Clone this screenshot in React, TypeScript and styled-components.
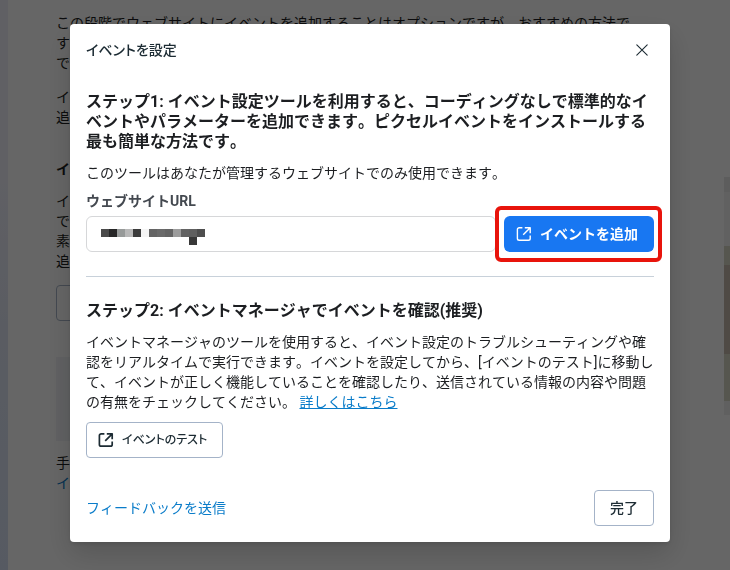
import React from "react";
import styled, { createGlobalStyle, css } from "styled-components";

const GlobalStyle = createGlobalStyle`
  *, *::before, *::after { box-sizing: border-box; }
  body {
    margin: 0;
    background: #fff;
    color: #1c1e21;
    font-family: Roboto, "Noto Sans CJK JP", sans-serif;
    font-size: 14px;
    line-height: 20px;
    font-kerning: none;
  }
  h1, h2, h3, p { margin: 0; }
  button, input { font: inherit; }
`;

const Page = styled.div`
  display: flex;
  height: 100vh;
  overflow: hidden;
`;

const Rail = styled.div`
  flex: none;
  width: 8px;
  background: linear-gradient(#f0f0fa, #f0f0fa 30%, #e0e6f5 60%, #d8e2f5);
`;

const Content = styled.main`
  flex: 1;
  display: flex;
  flex-direction: column;
  padding: 13px 88px 0 48px;
`;

const ContentText = styled.p`
  white-space: pre-line;
  margin-bottom: 14px;
`;

const ContentTitle = styled.h3`
  font-size: 14px;
  line-height: 20px;
  margin: 18px 0 12px;
`;

const ContentButton = styled.button`
  flex: none;
  width: 160px;
  height: 36px;
  margin-bottom: 36px;
  background: #fff;
  border: 1px solid #a9b6c9;
  border-radius: 4px;
`;

const ContentPanel = styled.div`
  flex: none;
  height: 84px;
  margin-bottom: 12px;
  background: #f1f3f6;
`;

const Aside = styled.aside`
  flex: none;
  width: 6px;
  margin-top: 177px;
`;

const AsideBand = styled.div<{ $height: number; $color: string }>`
  height: ${(p) => p.$height}px;
  background: ${(p) => p.$color};
`;

const Link = styled.a<{ $underlined?: boolean }>`
  color: #0a7cc9;
  text-decoration: ${(p) => (p.$underlined ? "underline" : "none")};
`;

const Backdrop = styled.div`
  position: fixed;
  inset: 0;
  display: flex;
  justify-content: center;
  align-items: flex-start;
  padding: 24px 60px 24px 70px;
  background: rgba(0, 0, 0, 0.6);
`;

const Dialog = styled.section`
  width: 100%;
  max-width: 600px;
  padding: 16px;
  background: #fff;
  border-radius: 4px;
  box-shadow: 0 12px 28px rgba(0, 0, 0, 0.16), 0 2px 4px rgba(0, 0, 0, 0.1);
`;

const DialogHeader = styled.header`
  display: flex;
  align-items: center;
  justify-content: space-between;
  height: 20px;
  margin-bottom: 32px;
`;

const DialogTitle = styled.h1`
  font-size: 14px;
  font-weight: 500;
  line-height: 20px;
  color: #1c2b33;
  font-feature-settings: "palt";
`;

const CloseButton = styled.button`
  display: flex;
  padding: 4px;
  margin-right: 2px;
  border: 0;
  background: none;
  color: #1c2b33;
`;

const StepTitle = styled.h2`
  font-size: 16px;
  font-weight: 700;
  line-height: 20px;
  margin-bottom: 11px;
`;

const Label = styled.label`
  display: block;
  margin: 8px 0 5px;
  font-weight: 700;
  color: #444950;
`;

const UrlRow = styled.div`
  display: flex;
  gap: 8px;
`;

const UrlField = styled.div`
  position: relative;
  flex: 1;
  display: flex;
`;

const UrlInput = styled.input`
  width: 100%;
  height: 36px;
  padding: 0 14px;
  background: #fff;
  border: 1px solid #d6d7d9;
  border-radius: 6px;
`;

const Mosaic = styled.svg`
  position: absolute;
  left: 15px;
  top: 13px;
`;

const buttonBase = css`
  display: inline-flex;
  align-items: center;
  gap: 8px;
  height: 36px;
  white-space: nowrap;
`;

const PrimaryButton = styled.button`
  ${buttonBase}
  position: relative;
  padding: 0 16px 0 12px;
  border: 0;
  border-radius: 6px;
  background: #1877f2;
  color: #fff;
  font-weight: 700;

  &::after {
    content: "";
    position: absolute;
    inset: -10px -8px -10px -9px;
    border: 4px solid #e8140c;
    border-radius: 6px;
  }
`;

const SecondaryButton = styled.button`
  ${buttonBase}
  padding: 0 15px 0 11px;
  border: 1px solid #a4b3c8;
  border-radius: 4px;
  background: #fff;
  color: #1c2b33;
  font-size: 12px;
  font-weight: 500;
  font-feature-settings: "palt";
`;

const DoneButton = styled(SecondaryButton)`
  padding: 0 15px;
  font-size: 14px;
`;

const Divider = styled.hr`
  height: 1px;
  margin: 24px 0;
  border: 0;
  background: #c8d1da;
`;

const StepText = styled.p`
  color: #1c1e21;
`;

const StepAction = styled.div`
  display: flex;
  margin-top: 10px;
`;

const DialogFooter = styled.footer`
  display: flex;
  align-items: center;
  justify-content: space-between;
  margin-top: 32px;
`;

const mosaicShades = [
  "#4a4a4a", "#262626", "#979a99", "#b8b8b8", "#3b3b3b", "#f5f5f5", "#646464",
  "#6a6a6a", "#646464", "#9c9c9c", "#636363", "#606060", "#4e4e4e",
];

const asideBands = [
  { height: 15, color: "#e8e8e8" },
  { height: 54, color: "#f2f2f2" },
  { height: 19, color: "#d6d6c6" },
  { height: 89, color: "#c5b9ad" },
  { height: 47, color: "#d6d6c6" },
  { height: 14, color: "#f0f0f0" },
];

function ExternalIcon({ stroke }: { stroke: number }) {
  return (
    <svg width="16" height="16" viewBox="0 0 16 16" fill="none" stroke="currentColor" strokeWidth={stroke} strokeLinejoin="round" aria-hidden="true">
      <path d="M6.4 1.8H3.2C2.2 1.8 1.4 2.6 1.4 3.6v8.8c0 1 .8 1.8 1.8 1.8h9.2c1 0 1.8-.8 1.8-1.8V9.6" />
      <path d="M8.8 1.8h5.4v5.4M14.2 1.8L7.2 8.8" />
    </svg>
  );
}

export default function App() {
  return (
    <>
      <GlobalStyle />
      <Page>
        <Rail />
        <Content>
          <ContentText>
            {"この段階でウェブサイトにイベントを追加することはオプションですが、おすすめの方法で\nす\nで"}
          </ContentText>
          <ContentText>{"イ\n追"}</ContentText>
          <ContentTitle>イベ</ContentTitle>
          <ContentText>{"イ\nで\n素\n追"}</ContentText>
          <ContentButton type="button" aria-hidden="true" tabIndex={-1} />
          <ContentPanel />
          <ContentText>
            手<br />
            <Link href="#">イ</Link>
          </ContentText>
        </Content>
        <Aside>
          {asideBands.map((band, i) => (
            <AsideBand key={i} $height={band.height} $color={band.color} />
          ))}
        </Aside>
      </Page>
      <Backdrop>
        <Dialog role="dialog" aria-modal="true" aria-labelledby="dialog-title">
          <DialogHeader>
            <DialogTitle id="dialog-title">イベントを設定</DialogTitle>
            <CloseButton type="button" aria-label="閉じる">
              <svg width="12" height="12" viewBox="0 0 12 12" stroke="currentColor" strokeWidth="1.1" strokeLinecap="round" aria-hidden="true">
                <path d="M.8 .8l10.4 10.4M11.2 .8L.8 11.2" />
              </svg>
            </CloseButton>
          </DialogHeader>

          <StepTitle>
            ステップ1: イベント設定ツールを利用すると、コーディングなしで標準的なイベントやパラメーターを追加できます。ピクセルイベントをインストールする最も簡単な方法です。
          </StepTitle>
          <StepText>このツールはあなたが管理するウェブサイトでのみ使用できます。</StepText>
          <Label htmlFor="site-url">ウェブサイトURL</Label>
          <UrlRow>
            <UrlField>
              <UrlInput id="site-url" type="url" />
              <Mosaic width="104" height="16" viewBox="0 0 104 16" shapeRendering="crispEdges" aria-hidden="true">
                {mosaicShades.map((shade, i) => (
                  <rect key={i} x={i * 8} y="0" width="8" height="8" fill={shade} />
                ))}
                <rect x="88" y="8" width="8" height="8" fill="#383838" />
              </Mosaic>
            </UrlField>
            <PrimaryButton type="button">
              <ExternalIcon stroke={1.4} />
              イベントを追加
            </PrimaryButton>
          </UrlRow>

          <Divider />

          <StepTitle>ステップ2: イベントマネージャでイベントを確認(推奨)</StepTitle>
          <StepText>
            イベントマネージャのツールを使用すると、イベント設定のトラブルシューティングや確認をリアルタイムで実行できます。イベントを設定してから、[イベントのテスト]に移動して、イベントが正しく機能していることを確認したり、送信されている情報の内容や問題の有無をチェックしてください。{" "}
            <Link href="#" $underlined>詳しくはこちら</Link>
          </StepText>
          <StepAction>
            <SecondaryButton type="button">
              <ExternalIcon stroke={1.7} />
              イベントのテスト
            </SecondaryButton>
          </StepAction>

          <DialogFooter>
            <Link href="#">フィードバックを送信</Link>
            <DoneButton type="button">完了</DoneButton>
          </DialogFooter>
        </Dialog>
      </Backdrop>
    </>
  );
}
